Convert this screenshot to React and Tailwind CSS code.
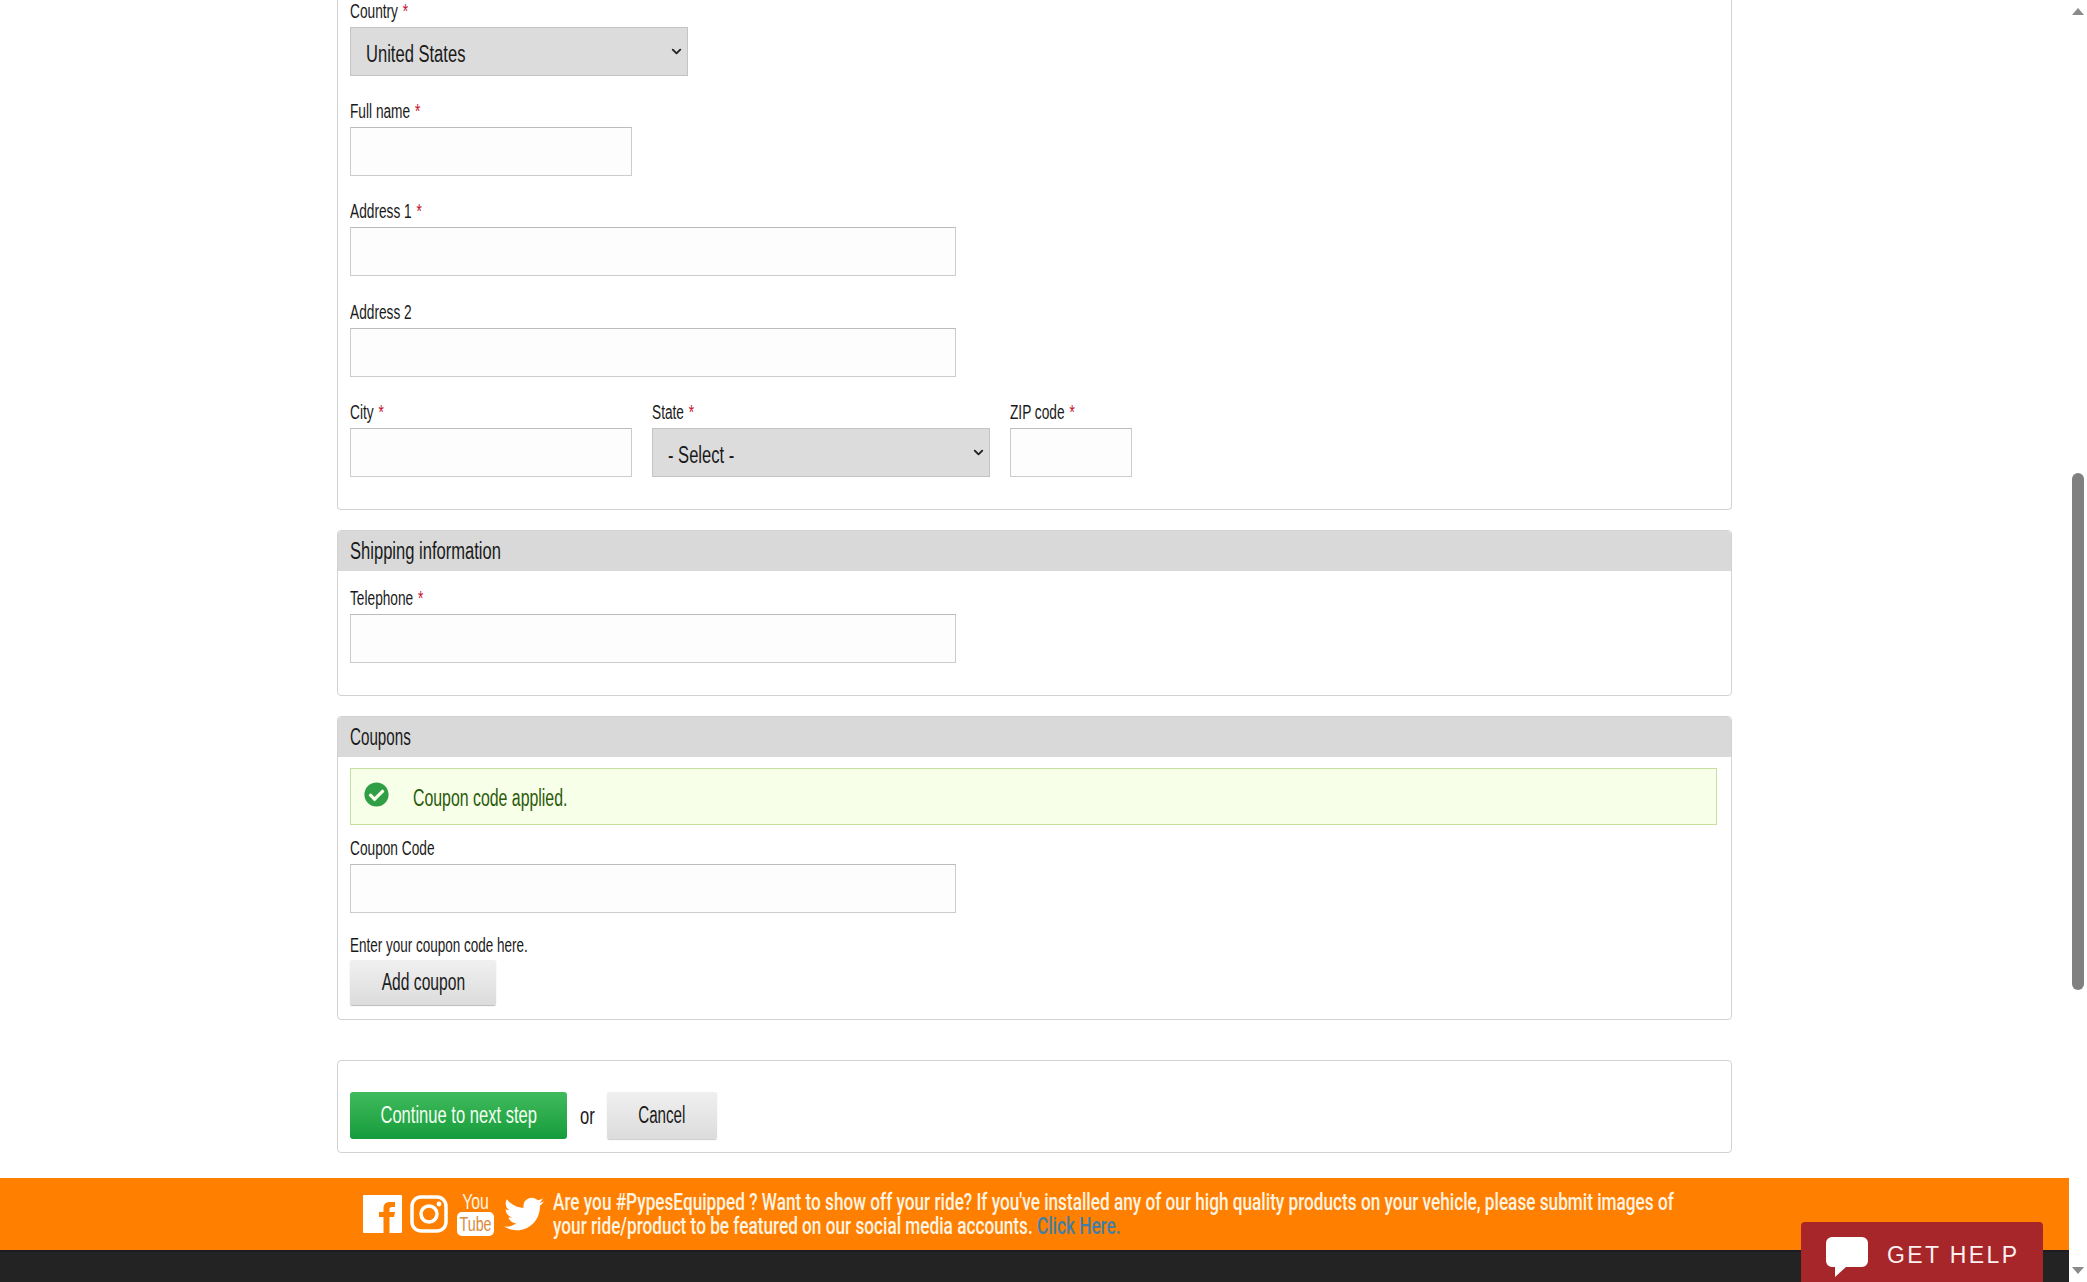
import { FaTwitter, FaCheckCircle } from 'react-icons/fa';
import { ChevronDown } from 'lucide-react';

function Narrow({ children, center, squeeze = 'scale-x-[0.72]', className = '' }) {
  return (
    <span className={`inline-block whitespace-nowrap ${squeeze} ${center ? 'origin-center' : 'origin-left'} ${className}`}>
      {children}
    </span>
  );
}

function Label({ text, required }) {
  return (
    <label className="block h-[24px] text-[20px] leading-[17px] text-[#1a1a1a]">
      <Narrow squeeze="scale-x-[0.685]">
        {text}
        {required && <span className="ml-[7px] text-[#c8102e]">*</span>}
      </Narrow>
    </label>
  );
}

function TextField({ label, required, width, className = '' }) {
  return (
    <div className={className}>
      <Label text={label} required={required} />
      <input
        type="text"
        className={`block h-[49px] ${width} border border-[#ccc] border-t-[#bbb] bg-[#fdfdfd]`}
      />
    </div>
  );
}

function SelectField({ label, value, required = true }) {
  return (
    <div>
      <Label text={label} required={required} />
      <div
        role="combobox"
        className="flex h-[49px] w-[338px] items-center justify-between border border-[#c4c4c4] bg-[#dcdcdc] pl-[15px] pr-[3px] text-[23px] text-[#1a1a1a]"
      >
        <Narrow className="mt-[6px]">{value}</Narrow>
        <ChevronDown size={15} strokeWidth={3} className="text-[#222]" />
      </div>
    </div>
  );
}

function Section({ title, squeeze, children, className = '' }) {
  return (
    <section className={`ml-[337px] w-[1395px] rounded-[4px] border border-[#d2d2d2] bg-white ${className}`}>
      <h2 className="flex h-[40px] items-center rounded-t-[4px] bg-[#d9d9d9] px-[12px] text-[23px] font-normal text-[#1a1a1a]">
        <Narrow squeeze={squeeze}>{title}</Narrow>
      </h2>
      {children}
    </section>
  );
}

function Triangle({ up }) {
  return (
    <svg width="12" height="7" viewBox="0 0 12 7" className="block">
      <path d={up ? 'M6 0 12 7H0Z' : 'M0 0H12L6 7Z'} fill="#8a8a8a" />
    </svg>
  );
}

function FacebookIcon() {
  return (
    <svg width="39" height="38" viewBox="0 0 39 38" className="shrink-0">
      <rect width="39" height="38" rx="1" fill="#fff" />
      <path d="M20.5 38V22H16v-5h4.5v-4C20.5 9 23 7 27 7h5v5h-3c-2 0-2.5 1-2.5 2v3H32l-1 5h-4.5v16z" fill="#ff8000" />
    </svg>
  );
}

function InstagramIcon() {
  return (
    <svg width="38" height="38" viewBox="0 0 38 38" className="ml-[8px] shrink-0">
      <rect x="2" y="2" width="34" height="34" rx="9" fill="none" stroke="#fff" strokeWidth="3.5" />
      <circle cx="19" cy="19" r="8" fill="none" stroke="#fff" strokeWidth="3.5" />
      <circle cx="29" cy="9" r="2.4" fill="#fff" />
    </svg>
  );
}

export default function App() {
  return (
    <div className="relative flex h-[1282px] w-full overflow-hidden bg-white font-['Liberation_Sans',sans-serif]">
      <main className="w-[2069px] shrink-0">
        <section className="ml-[337px] h-[510px] w-[1395px] rounded-b-[4px] border border-t-0 border-[#d2d2d2] px-[12px] pt-[3px]">
          <SelectField label="Country" value="United States" />
          <TextField className="mt-[27px]" label="Full name" required width="w-[282px]" />
          <TextField className="mt-[27px]" label="Address 1" required width="w-[606px]" />
          <TextField className="mt-[28px]" label="Address 2" width="w-[606px]" />
          <div className="mt-[27px] flex gap-[20px]">
            <TextField label="City" required width="w-[282px]" />
            <SelectField label="State" value="- Select -" />
            <TextField label="ZIP code" required width="w-[122px]" />
          </div>
        </section>

        <Section title="Shipping information" className="mt-[20px] h-[166px]">
          <div className="px-[12px] pt-[19px]">
            <TextField label="Telephone" required width="w-[606px]" />
          </div>
        </Section>

        <Section title="Coupons" squeeze="scale-x-[0.66]" className="mt-[20px] h-[304px]">
          <div className="px-[12px] pt-[11px]">
            <div className="flex h-[57px] w-[1367px] items-center border border-[#c5dfa0] bg-[#f8ffe8] pl-[13px] text-[23px] text-[#2a5a0a]">
              <FaCheckCircle className="mb-[4px] h-[25px] w-[25px] shrink-0 text-[#2f9e44]" />
              <Narrow squeeze="scale-x-[0.69]" className="ml-[24px] mt-[3px]">Coupon code applied.</Narrow>
            </div>
            <div className="mt-[15px]">
              <TextField label="Coupon Code" width="w-[606px]" />
            </div>
            <p className="mt-[23px] h-[24px] text-[20px] leading-[19px] text-[#1a1a1a]">
              <Narrow squeeze="scale-x-[0.675]">Enter your coupon code here.</Narrow>
            </p>
            <button className="block h-[45px] w-[146px] rounded-[2px] bg-gradient-to-b from-[#f0f0f0] to-[#dcdcdc] text-[23px] text-[#1a1a1a] shadow-[0_1px_1px_#bbb]">
              <Narrow center squeeze="scale-x-[0.68]">Add coupon</Narrow>
            </button>
          </div>
        </Section>

        <section className="ml-[337px] mt-[40px] flex h-[93px] w-[1395px] items-start rounded-[4px] border border-[#d2d2d2] px-[12px] pt-[31px]">
          <button className="h-[47px] w-[217px] rounded-[3px] bg-gradient-to-b from-[#3fbb5c] to-[#129c3c] text-[23px] text-[#f2fff2]">
            <Narrow center>Continue to next step</Narrow>
          </button>
          <span className="ml-[13px] mt-[7px] w-[14px] text-[23px] text-[#1a1a1a]">
            <Narrow>or</Narrow>
          </span>
          <button className="ml-[13px] h-[47px] w-[110px] rounded-[2px] bg-gradient-to-b from-[#f0f0f0] to-[#dcdcdc] text-[23px] text-[#1a1a1a] shadow-[0_1px_1px_#ccc]">
            <Narrow center squeeze="scale-x-[0.66]">Cancel</Narrow>
          </button>
        </section>

        <div className="mt-[25px] flex h-[72px] items-center bg-[#ff8000] pl-[363px] text-[#fff4e4]">
          <FacebookIcon />
          <InstagramIcon />
          <div className="ml-[9px] flex w-[37px] shrink-0 flex-col items-center">
            <span className="flex h-[20px] w-[37px] justify-center text-[22px] leading-[20px]"><Narrow center>You</Narrow></span>
            <span className="flex h-[24px] w-[37px] justify-center rounded-[5px] bg-white text-[21px] leading-[24px] text-[#d98a3a]">
              <Narrow center squeeze="scale-x-[0.68]">Tube</Narrow>
            </span>
          </div>
          <FaTwitter className="ml-[10px] h-[40px] w-[40px] shrink-0 text-white" />
          <div className="ml-[9px] mt-[2px] font-['Roboto',sans-serif] text-[23px] leading-[24px] font-medium">
            <div>
              <Narrow squeeze="scale-x-[0.748]">Are you #PypesEquipped ? Want to show off your ride? If you've installed any of our high quality products on your vehicle, please submit images of</Narrow>
            </div>
            <div>
              <Narrow squeeze="scale-x-[0.748]">
                your ride/product to be featured on our social media accounts.{' '}
                <a className="text-[#3f7fa8]">Click Here.</a>
              </Narrow>
            </div>
          </div>
        </div>
        <div className="h-[32px] border-t-[2px] border-[#1c1c24] bg-[#232323]" />
      </main>

      <aside className="flex w-[18px] flex-col items-center pb-[8px] pt-[8px]">
        <Triangle up />
        <div className="-ml-[1px] mt-[458px] h-[517px] w-[12px] rounded-full bg-[#808080]" />
        <div className="mt-auto">
          <Triangle />
        </div>
      </aside>

      <div className="absolute bottom-0 left-[1801px] flex h-[60px] w-[242px] items-start rounded-t-[4px] bg-[#a6262a] pl-[25px] pt-[15px] text-[#fdf0f0]">
        <svg width="42" height="40" viewBox="0 0 42 40" className="shrink-0">
          <path d="M6 0h30a6 6 0 0 1 6 6v18a6 6 0 0 1-6 6H20L9 40l0-10H6a6 6 0 0 1-6-6V6a6 6 0 0 1 6-6Z" fill="#fff" />
        </svg>
        <span className="ml-[19px] text-[23px] leading-[36px] tracking-[2.4px]">GET HELP</span>
      </div>
    </div>
  );
}
